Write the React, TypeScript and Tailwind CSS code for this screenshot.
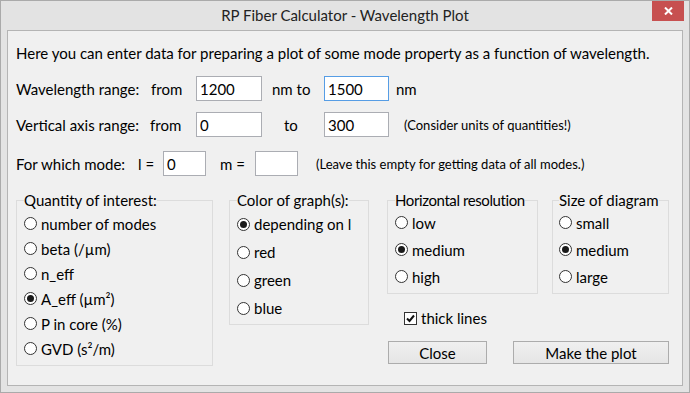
import React from "react";

const quantities = [
  { label: "number of modes" },
  { label: "beta (/µm)" },
  { label: "n_eff" },
  { label: "A_eff (µm²)", checked: true },
  { label: "P in core (%)" },
  { label: "GVD (s²/m)" },
];

const colors = [
  { label: "depending on l", checked: true },
  { label: "red" },
  { label: "green" },
  { label: "blue" },
];

const resolutions = [{ label: "low" }, { label: "medium", checked: true }, { label: "high" }];
const sizes = [{ label: "small" }, { label: "medium", checked: true }, { label: "large" }];

function Radio({ checked }: { checked?: boolean }) {
  return (
    <span className="w-[13px] h-[13px] rounded-full border border-[#333] bg-white flex items-center justify-center shrink-0">
      {checked && <span className="w-[7px] h-[7px] rounded-full bg-[#1a1a1a]" />}
    </span>
  );
}

function RadioItem({ label, checked, h }: { label: string; checked?: boolean; h: string }) {
  return (
    <div className={`flex items-center gap-[4px] ${h}`}>
      <Radio checked={checked} />
      <span>{label}</span>
    </div>
  );
}

function Field({ value, w, focused }: { value: string; w: string; focused?: boolean }) {
  return (
    <div
      className={`${w} h-[25px] bg-white border flex items-center pl-[3px] ${
        focused ? "border-[#569de5]" : "border-[#abadb3]"
      }`}
    >
      {value}
    </div>
  );
}

function Button({ label, w }: { label: string; w: string }) {
  return (
    <div
      className={`${w} h-[23px] border border-[#acacac] bg-gradient-to-b from-[#f0f0f0] to-[#e5e5e5] flex items-center justify-center`}
    >
      {label}
    </div>
  );
}

export default function App() {
  return (
    <div className="w-[690px] h-[393px] border border-[#aaaaaa] bg-[#e3e3e3] flex flex-col font-[Lato] text-[15px] leading-[18px] text-black">
      {/* title bar */}
      <div className="h-[29px] grid grid-cols-[1fr_auto_1fr] items-start">
        <div />
        <div className="pt-[5px] text-[#222]">RP Fiber Calculator - Wavelength Plot</div>
        <div className="flex justify-end pr-[5px]">
          <div className="w-[32px] h-[20px] bg-[#c75050] flex items-center justify-center">
            <svg width="9" height="8" viewBox="0 0 9 8">
              <path d="M1 0.5 L8 7.5 M8 0.5 L1 7.5" stroke="white" strokeWidth="2" />
            </svg>
          </div>
        </div>
      </div>

      {/* client area */}
      <div className="mx-[6px] h-[356px] border border-[#b4b4b4] bg-[#f0f0f0] pl-[8px] pt-[10px] flex flex-col">
        <div className="h-[24px] flex items-center">
          Here you can enter data for preparing a plot of some mode property as a function of wavelength.
        </div>

        <div className="mt-[11px] h-[25px] flex items-center">
          <span className="w-[135px]">Wavelength range:</span>
          <span className="w-[45px]">from</span>
          <Field value="1200" w="w-[66px]" />
          <span className="w-[62px] pl-[10px]">nm to</span>
          <Field value="1500" w="w-[65px]" focused />
          <span className="pl-[7px]">nm</span>
        </div>

        <div className="mt-[11px] h-[25px] flex items-center">
          <span className="w-[134px]">Vertical axis range:</span>
          <span className="w-[46px]">from</span>
          <Field value="0" w="w-[66px]" />
          <span className="w-[62px] pl-[22px]">to</span>
          <Field value="300" w="w-[65px]" />
          <span className="pl-[15px] text-[13px]">(Consider units of quantities!)</span>
        </div>

        <div className="mt-[14px] h-[25px] flex items-center">
          <span className="w-[122px]">For which mode:</span>
          <span className="w-[25px]">l =</span>
          <Field value="0" w="w-[43px]" />
          <span className="w-[49px] pl-[14px]">m =</span>
          <Field value="" w="w-[43px]" />
          <span className="pl-[18px] text-[13px]">(Leave this empty for getting data of all modes.)</span>
        </div>

        {/* option groups */}
        <div className="mt-[15px] flex items-start">
          <fieldset className="w-[197px] min-w-0 border border-[#dcdcdc] px-[7px] pb-[4px]">
            <legend className="leading-[18px]">Quantity of interest:</legend>
            <div className="mt-[2px] flex flex-col">
              {quantities.map((q) => (
                <RadioItem key={q.label} label={q.label} checked={q.checked} h="h-[25px]" />
              ))}
            </div>
          </fieldset>

          <fieldset className="ml-[16px] w-[140px] min-w-0 border border-[#dcdcdc] px-[7px] pb-[2px]">
            <legend className="leading-[18px]">Color of graph(s):</legend>
            <div className="mt-[1px] flex flex-col">
              {colors.map((c) => (
                <RadioItem key={c.label} label={c.label} checked={c.checked} h="h-[28px]" />
              ))}
            </div>
          </fieldset>

          <div className="ml-[18px] flex flex-col">
            <div className="flex items-start">
              <fieldset className="w-[151px] min-w-0 border border-[#dcdcdc] px-[7px] pb-[3px]">
                <legend className="leading-[18px] whitespace-nowrap tracking-[-0.4px]">Horizontal resolution</legend>
                <div className="flex flex-col">
                  {resolutions.map((r) => (
                    <RadioItem key={r.label} label={r.label} checked={r.checked} h="h-[27px]" />
                  ))}
                </div>
              </fieldset>
              <fieldset className="ml-[14px] w-[117px] min-w-0 border border-[#dcdcdc] px-[6px] pb-[3px]">
                <legend className="leading-[18px] whitespace-nowrap">Size of diagram</legend>
                <div className="flex flex-col">
                  {sizes.map((s) => (
                    <RadioItem key={s.label + "s"} label={s.label} checked={s.checked} h="h-[27px]" />
                  ))}
                </div>
              </fieldset>
            </div>

            <div className="mt-[14px] h-[20px] pl-[17px] flex items-center gap-[4px]">
              <span className="w-[13px] h-[13px] border border-[#333] bg-white flex items-center justify-center">
                <svg width="11" height="11" viewBox="0 0 11 11">
                  <path d="M2 5.5 L4.5 8 L9 2.5" stroke="#111" strokeWidth="2" fill="none" />
                </svg>
              </span>
              <span>thick lines</span>
            </div>

            <div className="mt-[13px] pl-[1px] flex gap-[26px]">
              <Button label="Close" w="w-[99px]" />
              <Button label="Make the plot" w="w-[156px]" />
            </div>
          </div>
        </div>
      </div>
    </div>
  );
}
